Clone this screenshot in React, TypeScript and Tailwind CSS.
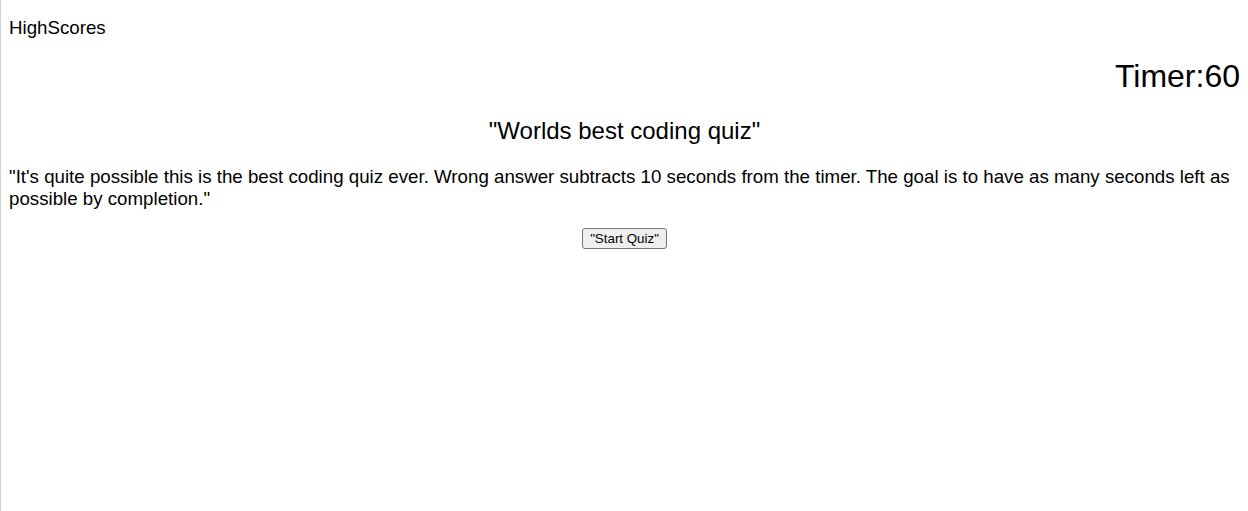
export default function App() {
  return (
    <div className="min-h-[511px] border-l border-[#d4d4d4] bg-white px-2 pt-4 text-black font-['Liberation_Sans',Arial,sans-serif]">
      <header>
        <a className="block pt-px text-[18.72px] leading-[21px]">HighScores</a>
        <div className="mt-[20px] text-right text-[32px] leading-[37px]">Timer:60</div>
      </header>

      <main className="flex flex-col">
        <h1 className="mt-[22px] text-center text-[24px] leading-[28px]">"Worlds best coding quiz"</h1>
        <p className="mt-[21px] text-[18.72px] leading-[22px]">
          "It's quite possible this is the best coding quiz ever. Wrong answer subtracts 10 seconds from the timer. The goal is to have as many seconds left as possible by completion."
        </p>
        <div className="mt-[18px] flex justify-center">
          <button className="h-[21px] rounded-[3px] border border-[#767676] bg-[#efefef] px-[7px] text-[13.33px] leading-[16px]">
            "Start Quiz"
          </button>
        </div>
      </main>
    </div>
  );
}
